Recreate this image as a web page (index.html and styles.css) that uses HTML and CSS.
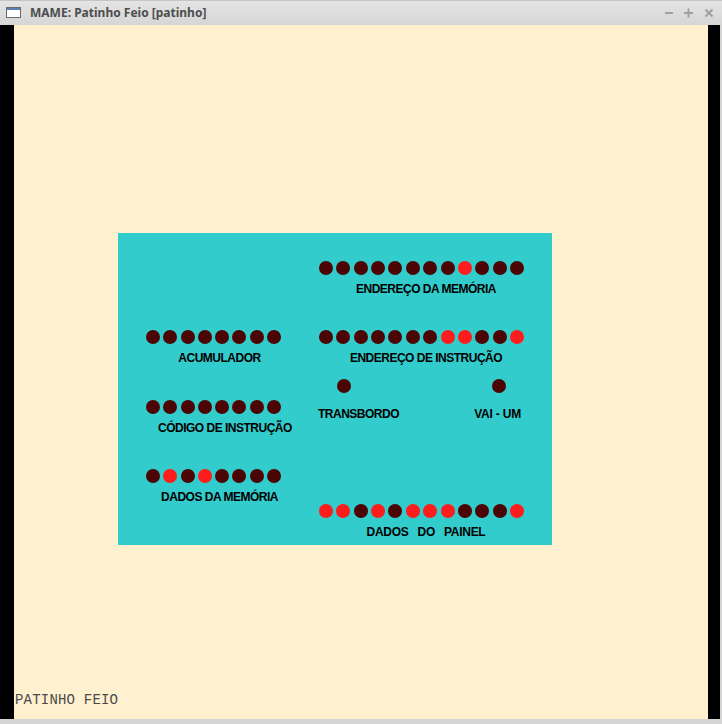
FILE: index.html
```html
<!DOCTYPE html>
<html lang="pt">
<head>
<meta charset="utf-8">
<title>MAME: Patinho Feio [patinho]</title>
<link rel="stylesheet" href="styles.css">
</head>
<body>
<div class="window">
  <div class="titlebar">
    <svg class="app-icon" width="15" height="11" viewBox="0 0 15 11">
      <rect x="0.5" y="0.5" width="14" height="10" fill="#ffffff" stroke="#6b6b6b"/>
      <rect x="1" y="1" width="13" height="2" fill="#5a7fb0"/>
    </svg>
    <span class="title">MAME: Patinho Feio [patinho]</span>
    <svg class="controls" width="56" height="25" viewBox="0 0 56 25">
      <g stroke="#a0a0a0" stroke-width="2" fill="none">
        <line x1="5" y1="13" x2="13" y2="13"/>
        <line x1="24" y1="13" x2="33" y2="13"/>
        <line x1="28.5" y1="8.5" x2="28.5" y2="17.5"/>
        <line x1="45.5" y1="9.5" x2="52.5" y2="16.5"/>
        <line x1="52.5" y1="9.5" x2="45.5" y2="16.5"/>
      </g>
    </svg>
  </div>
  <div class="client">
    <div class="bar-left"></div>
    <div class="screen">
      <div class="panel">
        <div class="col col-left">
          <div class="group">
            <div class="leds leds-8">
              <i class="led"></i><i class="led"></i><i class="led"></i><i class="led"></i><i class="led"></i><i class="led"></i><i class="led"></i><i class="led"></i>
            </div>
            <div class="label label-left">ACUMULADOR</div>
          </div>
          <div class="group">
            <div class="leds leds-8">
              <i class="led"></i><i class="led"></i><i class="led"></i><i class="led"></i><i class="led"></i><i class="led"></i><i class="led"></i><i class="led"></i>
            </div>
            <div class="label label-left">CÓDIGO DE INSTRUÇÃO</div>
          </div>
          <div class="group">
            <div class="leds leds-8">
              <i class="led"></i><i class="led on"></i><i class="led"></i><i class="led on"></i><i class="led"></i><i class="led"></i><i class="led"></i><i class="led"></i>
            </div>
            <div class="label label-left">DADOS DA MEMÓRIA</div>
          </div>
        </div>
        <div class="col col-right">
          <div class="group">
            <div class="leds leds-12">
              <i class="led"></i><i class="led"></i><i class="led"></i><i class="led"></i><i class="led"></i><i class="led"></i><i class="led"></i><i class="led"></i><i class="led on"></i><i class="led"></i><i class="led"></i><i class="led"></i>
            </div>
            <div class="label label-right">ENDEREÇO DA MEMÓRIA</div>
          </div>
          <div class="group group-gap">
            <div class="leds leds-12">
              <i class="led"></i><i class="led"></i><i class="led"></i><i class="led"></i><i class="led"></i><i class="led"></i><i class="led"></i><i class="led on"></i><i class="led on"></i><i class="led"></i><i class="led"></i><i class="led on"></i>
            </div>
            <div class="label label-right">ENDEREÇO DE INSTRUÇÃO</div>
          </div>
          <div class="flags">
            <div class="flag flag-overflow">
              <i class="led"></i>
              <div class="label flag-label">TRANSBORDO</div>
            </div>
            <div class="flag flag-carry">
              <i class="led"></i>
              <div class="label flag-label">VAI - UM</div>
            </div>
          </div>
          <div class="group group-panel">
            <div class="leds leds-12">
              <i class="led on"></i><i class="led on"></i><i class="led"></i><i class="led on"></i><i class="led"></i><i class="led on"></i><i class="led on"></i><i class="led on"></i><i class="led"></i><i class="led"></i><i class="led"></i><i class="led on"></i>
            </div>
            <div class="label label-right label-wide">DADOS&nbsp;&nbsp; DO&nbsp;&nbsp; PAINEL</div>
          </div>
        </div>
      </div>
      <div class="caption">PATINHO FEIO</div>
    </div>
    <div class="bar-right"></div>
    <div class="frame-edge"></div>
  </div>
  <div class="frame-bottom"></div>
</div>
</body>
</html>
```

FILE: styles.css
```css
html, body {
  margin: 0;
  padding: 0;
  width: 722px;
  height: 724px;
  overflow: hidden;
  background: #d4d4d4;
}

.window {
  display: flex;
  flex-direction: column;
  width: 722px;
  height: 724px;
}

.titlebar {
  height: 25px;
  flex: none;
  display: flex;
  align-items: center;
  padding-left: 6px;
  box-sizing: border-box;
  background: linear-gradient(#e4e4e4, #d6d6d6);
  border-top: 1px solid #c4c4c4;
}

.app-icon {
  display: block;
  flex: none;
  margin-right: 9px;
  margin-top: -1px;
}

.title {
  font-family: "Noto Sans", "Open Sans", sans-serif;
  font-weight: bold;
  font-size: 12px;
  line-height: 16px;
  color: #4d4d4d;
  margin-top: -1px;
}

.controls {
  display: block;
  margin-left: auto;
  margin-right: 6px;
  margin-top: -1px;
}

.client {
  height: 694px;
  flex: none;
  display: flex;
}

.bar-left {
  width: 14px;
  background: #000;
  flex: none;
}

.screen {
  width: 694px;
  flex: none;
  background: #fff0cf;
  display: flex;
  flex-direction: column;
}

.bar-right {
  width: 12px;
  background: #000;
  flex: none;
}

.frame-edge {
  width: 2px;
  background: #d4d4d4;
  flex: none;
}

.frame-bottom {
  height: 5px;
  flex: none;
  background: #d4d4d4;
}

.panel {
  margin-top: 208px;
  margin-left: 104px;
  width: 434px;
  height: 312px;
  box-sizing: border-box;
  padding-left: 28px;
  background: #33cccc;
  display: grid;
  grid-template-columns: 135px 205px;
  column-gap: 38px;
  align-items: start;
}

.col {
  display: flex;
  flex-direction: column;
}

.col-left {
  padding-top: 97px;
  gap: 34.5px;
}

.col-right {
  padding-top: 28px;
}

.group {
  display: flex;
  flex-direction: column;
}

.group-gap {
  margin-top: 34px;
}

.group-panel {
  margin-top: 83px;
}

.leds {
  display: flex;
  justify-content: space-between;
  height: 14px;
}

.led {
  display: block;
  width: 14px;
  height: 14px;
  border-radius: 50%;
  background: #4b0505;
  flex: none;
}

.led.on {
  background: #ff1c1c;
}

.label {
  font-family: "Liberation Sans", Arial, sans-serif;
  font-weight: bold;
  font-size: 12px;
  line-height: 14px;
  letter-spacing: -0.5px;
  color: #000;
  white-space: nowrap;
  margin-top: 7px;
  text-align: center;
}

.label-left {
  padding-left: 12px;
}

.label-right {
  padding-left: 9px;
}

.label-wide {
  letter-spacing: -0.3px;
}

.flags {
  display: flex;
  justify-content: space-between;
  margin-top: 14px;
  margin-left: -1px;
  margin-right: 3px;
}

.flag {
  display: flex;
  flex-direction: column;
  align-items: flex-start;
}

.flag-overflow .led {
  margin-left: 19px;
}

.flag-carry .led {
  margin-left: 18px;
}

.flag-carry .flag-label {
  letter-spacing: -0.2px;
}

.flag-label {
  margin-top: 14px;
  text-align: left;
}

.caption {
  margin-top: auto;
  padding-left: 1px;
  padding-bottom: 11px;
  font-family: "Liberation Mono", "DejaVu Sans Mono", monospace;
  font-size: 14px;
  line-height: 16px;
  letter-spacing: 0.2px;
  color: #4a4a4a;
}
```
